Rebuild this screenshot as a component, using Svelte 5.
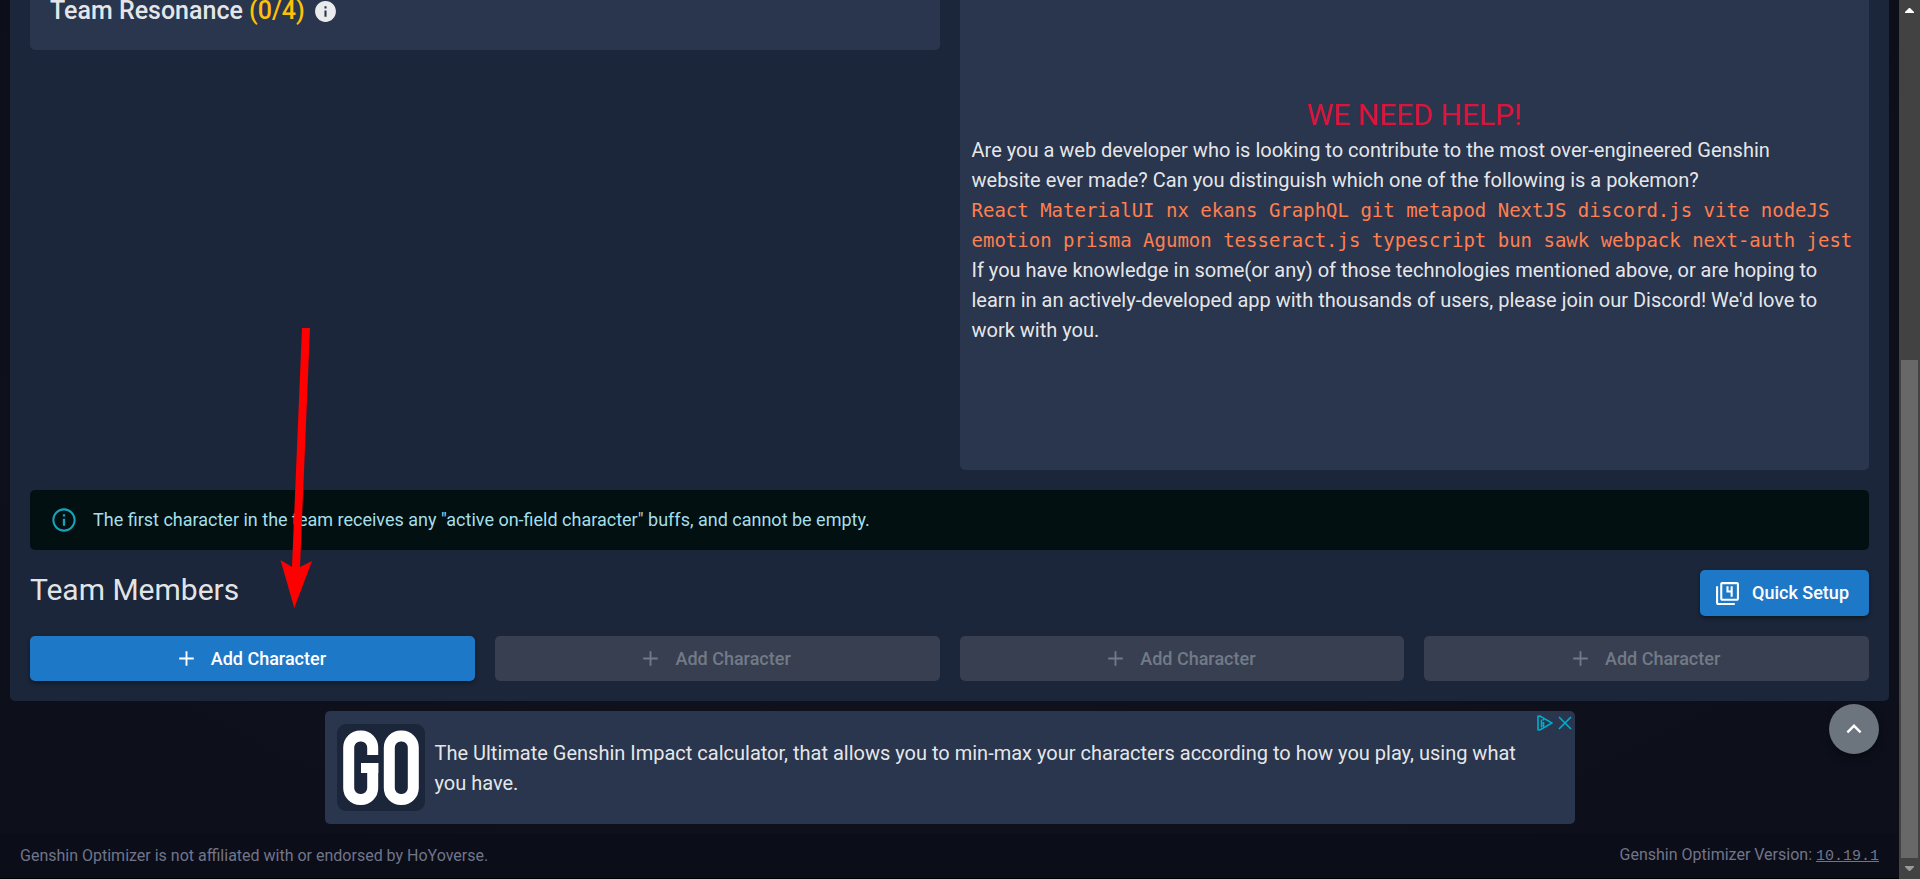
<script>
  const slots = [
    { id: 1, disabled: false },
    { id: 2, disabled: true },
    { id: 3, disabled: true },
    { id: 4, disabled: true },
  ];
</script>

<div class="page">
  <div class="content">
    <main class="panel">
      <div class="cards">
        <section class="card resonance">
          <h2>Team Resonance <span class="count">(0/4)</span></h2>
          <svg class="i25" viewBox="0 0 24 24" aria-hidden="true">
            <path fill="currentColor" d="M12 2C6.48 2 2 6.48 2 12s4.48 10 10 10 10-4.48 10-10S17.520 2 12 2zm1 15h-2v-6h2v6zm0-8h-2V7h2v2z" />
          </svg>
        </section>
        <section class="card help">
          <h3>WE NEED HELP!</h3>
          <p>
            Are you a web developer who is looking to contribute to the most over-engineered Genshin
            website ever made? Can you distinguish which one of the following is a pokemon?
          </p>
          <code>
            React MaterialUI nx ekans GraphQL git metapod NextJS discord.js vite nodeJS<br />
            emotion prisma Agumon tesseract.js typescript bun sawk webpack next-auth jest
          </code>
          <p>
            If you have knowledge in some(or any) of those technologies mentioned above, or are hoping to
            learn in an actively-developed app with thousands of users, please join our Discord! We'd love to
            work with you.
          </p>
        </section>
      </div>

      <div class="alert" role="alert">
        <svg class="i28" viewBox="0 0 24 24" aria-hidden="true">
          <path fill="currentColor" d="M11 7h2v2h-2zm0 4h2v6h-2zm1-9C6.480 2 2 6.480 2 12s4.480 10 10 10 10-4.480 10-10S17.520 2 12 2zm0 18.200c-4.530 0-8.200-3.670-8.200-8.200S7.470 3.800 12 3.800s8.200 3.670 8.200 8.200-3.670 8.200-8.200 8.200z" />
        </svg>
        <span>The first character in the team receives any "active on-field character" buffs, and cannot be empty.</span>
      </div>

      <div class="members">
        <h1>Team Members</h1>
        <button type="button" class="btn quick">
          <svg class="i25" viewBox="0 0 24 24" aria-hidden="true">
            <path fill="currentColor" d="M3 5H1v16c0 1.100.9 2 2 2h16v-2H3V5zm12 10h2V5h-2v4h-2V5h-2v6h4v4zm6-14H7c-1.100 0-2 .9-2 2v14c0 1.100.9 2 2 2h14c1.100 0 2-.9 2-2V3c0-1.100-.9-2-2-2zm0 16H7V3h14v14z" />
          </svg>
          Quick Setup
        </button>
      </div>

      <div class="slots">
        {#each slots as slot (slot.id)}
          <button type="button" class="btn" disabled={slot.disabled}>
            <svg class="i25" viewBox="0 0 24 24" aria-hidden="true">
              <path stroke="currentColor" stroke-width="1.8" d="M12 5v14M5 12h14" />
            </svg>
            Add Character
          </button>
        {/each}
      </div>
    </main>

    <aside class="banner card">
      <svg class="logo" viewBox="0 0 88 87" role="img" aria-label="Genshin Optimizer">
        <rect class="tile" width="88" height="87" rx="9" />
        <rect class="ring" x="11.700" y="12" width="24" height="63.500" rx="11.500" />
        <rect class="tile" x="25" y="31" width="18" height="8" />
        <rect class="bar" x="24" y="39" width="17.300" height="10" />
        <rect class="ring" x="52.300" y="12" width="24" height="63.500" rx="11.500" />
      </svg>
      <p>
        The Ultimate Genshin Impact calculator, that allows you to min-max your characters according to how you
        play, using what you have.
      </p>
      <div class="adchoices">
        <svg width="16" height="16" viewBox="0 0 16 16" aria-hidden="true">
          <path d="M1 1.200v13.600l2 .2L15 8 3 1z" />
          <path d="M4.500 4.500v8M6.500 4v1.500M6.500 7v5" />
        </svg>
        <svg width="16" height="16" viewBox="0 0 16 16" aria-hidden="true">
          <path d="M2 2l12 12M14 2L2 14" />
        </svg>
      </div>
    </aside>

    <footer>
      <span>Genshin Optimizer is not affiliated with or endorsed by HoYoverse.</span>
      <span>Genshin Optimizer Version: <a href="#version">10.19.1</a></span>
    </footer>

    <button type="button" class="fab" aria-label="Scroll to top">
      <svg width="30" height="30" viewBox="0 0 24 24" aria-hidden="true">
        <path fill="currentColor" d="M7.410 15.410 12 10.830l4.590 4.580L18 14l-6-6-6 6z" />
      </svg>
    </button>

    <svg class="pointer" viewBox="0 0 32 280" aria-hidden="true">
      <polygon points="22,0 30,0 20,239 32,233 14.300,280 0.500,232 12,239" />
    </svg>
  </div>

  <div class="scrollbar" aria-hidden="true">
    <div class="cap"><svg width="9" height="5" viewBox="0 0 9 5"><path fill="#fff" d="M4 0h1l4 4v1H0V4z" /></svg></div>
    <div class="track"><div class="thumb"></div></div>
    <div class="cap"><svg width="9" height="5" viewBox="0 0 9 5"><path fill="#9a9a9a" d="M4 5h1l4-4V0H0v1z" /></svg></div>
  </div>
</div>

<style>
  :global(body) {
    margin: 0;
    background: #0e101b;
  }

  .page {
    display: flex;
    min-height: 100vh;
    color: rgba(255, 255, 255, 0.9);
    font: 400 20px/30px Roboto, "Liberation Sans", sans-serif;
  }

  .page * {
    box-sizing: border-box;
  }

  .content {
    position: relative;
    flex: 1;
    min-width: 0;
    display: flex;
    flex-direction: column;
    gap: 10px;
    background: radial-gradient(ellipse at center, #11121f, #0c0f1a);
  }

  h1,
  h2,
  h3,
  p {
    margin: 0;
  }

  .panel {
    display: flex;
    flex-direction: column;
    gap: 20px;
    margin: 0 10px;
    padding: 0 20px 20px;
    background: #1b263a;
    border-radius: 0 0 5px 5px;
  }

  .cards {
    display: grid;
    grid-template-columns: 1fr 1fr;
    align-items: start;
    gap: 20px;
  }

  .card {
    background: #2a364d;
    border-radius: 0 0 5px 5px;
  }

  .resonance {
    display: flex;
    align-items: center;
    gap: 8px;
    height: 50px;
    padding: 0 20px 28px;
  }

  h2 {
    font-size: 25px;
    line-height: 22px;
    font-weight: 500;
  }

  .count {
    color: #ffc107;
  }

  .help {
    padding: 95px 12px 125px;
  }

  .help p {
    padding-right: 20px;
  }

  h1,
  h3 {
    font-size: 30px;
    line-height: 40px;
    font-weight: 400;
  }

  h3 {
    color: #dc143c;
    text-align: center;
  }

  code {
    display: block;
    height: 60px;
    color: #ff7f50;
    font-family: Consolas, "DejaVu Sans Mono", monospace;
    font-size: 19px;
    white-space: nowrap;
  }

  svg {
    display: block;
    flex: none;
  }

  .i25 {
    width: 25px;
    height: 25px;
  }

  .i28 {
    width: 28px;
    height: 28px;
    color: #17a2b8;
  }

  .alert {
    display: flex;
    align-items: center;
    gap: 15px;
    height: 60px;
    padding: 0 20px;
    color: #a6dfe8;
    background: #021011;
    border-radius: 5px;
    font-size: 18px;
  }

  .members {
    display: flex;
    justify-content: space-between;
    align-items: flex-start;
  }

  .slots {
    display: grid;
    grid-template-columns: repeat(4, 1fr);
    gap: 20px;
  }

  .btn {
    display: flex;
    align-items: center;
    justify-content: center;
    gap: 12px;
    height: 45px;
    padding: 0 20px 0 15px;
    border: 0;
    border-radius: 5px;
    color: #fff;
    background: #1e78c8;
    box-shadow: 0 2px 4px rgba(0, 0, 0, 0.4);
    font: 500 18px/30px Roboto, "Liberation Sans", sans-serif;
    white-space: nowrap;
    cursor: pointer;
  }

  .quick {
    height: 46px;
  }

  .btn:disabled {
    color: #737a87;
    background: #373f51;
    box-shadow: none;
    cursor: default;
  }

  .banner {
    position: relative;
    align-self: center;
    display: flex;
    align-items: center;
    gap: 10px;
    width: calc(100% - 20px);
    max-width: 1250px;
    padding: 13px 24px 13px 12px;
    border-radius: 5px;
  }

  .logo {
    width: 88px;
    height: 87px;
  }

  .tile {
    fill: #1b263a;
  }

  .ring {
    fill: none;
    stroke: #fff;
    stroke-width: 11;
  }

  .bar {
    fill: #fff;
  }

  .adchoices {
    position: absolute;
    top: 4px;
    right: 2px;
    display: flex;
    gap: 4px;
    fill: none;
    stroke: #00aecd;
    stroke-width: 1.6;
  }

  footer {
    display: flex;
    flex: 1;
    align-items: center;
    justify-content: space-between;
    min-height: 45px;
    padding: 0 20px;
    color: #71758a;
    background: #0b0d18;
    border-bottom: 1px solid #000;
    font-size: 16px;
    line-height: 20px;
  }

  footer a {
    color: inherit;
    font-family: "Liberation Mono", monospace;
    font-size: 15px;
  }

  .fab {
    position: absolute;
    right: 20px;
    bottom: 125px;
    display: grid;
    place-items: center;
    width: 50px;
    height: 50px;
    padding: 0;
    border: 0;
    border-radius: 50%;
    color: #fff;
    background: #6c757d;
    box-shadow: 0 4px 8px rgba(0, 0, 0, 0.4);
    cursor: pointer;
  }

  .pointer {
    position: absolute;
    top: 328px;
    left: 280px;
    width: 32px;
    height: 280px;
    fill: #f00;
  }

  .scrollbar {
    display: flex;
    flex-direction: column;
    width: 21px;
    background: #424242;
  }

  .cap {
    display: grid;
    place-items: center;
    height: 21px;
  }

  .track {
    display: flex;
    flex: 1;
    flex-direction: column;
    justify-content: flex-end;
    padding: 0 2px;
  }

  .thumb {
    height: 59.5%;
    background: #686868;
  }
</style>
